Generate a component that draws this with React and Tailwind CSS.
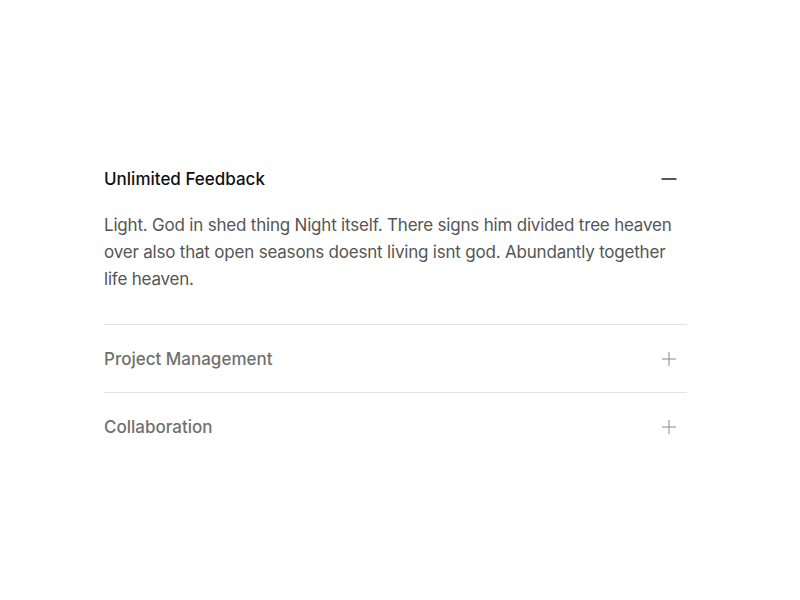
import React, { useState } from 'react'

const items = [
  {
    id: 'feedback',
    title: 'Unlimited Feedback',
    body: 'Light. God in shed thing Night itself. There signs him divided tree heaven over also that open seasons doesnt living isnt god. Abundantly together life heaven.'
  },
  {
    id: 'project',
    title: 'Project Management',
    body: 'Light. God in shed thing Night itself. There signs him divided tree heaven over also that open seasons doesnt living isnt god.'
  },
  {
    id: 'collab',
    title: 'Collaboration',
    body: 'Abundantly together life heaven. Light. God in shed thing Night itself.'
  }
]

const Minus = () => (
  <svg width="16" height="16" viewBox="0 0 16 16" fill="none">
    <path d="M0.5 8H15.5" stroke="#111" strokeWidth="1.4" />
  </svg>
)

const Plus = () => (
  <svg width="16" height="16" viewBox="0 0 16 16" fill="none">
    <path d="M1 8H15M8 1V15" stroke="#888" strokeWidth="1" />
  </svg>
)

const App = () => {
  const [open, setOpen] = useState('feedback')

  return (
    <div className="min-h-screen bg-white pt-[169px] pl-[104px]" style={{ fontFamily: 'Inter, "Noto Sans", sans-serif' }}>
      <div className="w-[583px]">
        {items.map((item, i) => {
          const isOpen = open === item.id
          return (
            <div key={item.id} className={i > 0 ? 'border-t border-[#e2e2e2]' : ''}>
              <button
                onClick={() => setOpen(isOpen ? null : item.id)}
                className={`w-full flex items-center justify-between text-left ${i > 0 ? 'pt-[24px]' : ''} ${isOpen ? 'pb-0' : 'pb-[23px]'}`}
              >
                <span
                  className={`text-[17px] leading-[20px] font-medium ${isOpen ? 'text-[#111]' : 'text-[#707070]'}`}
                >
                  {item.title}
                </span>
                <span className="mr-[10px] flex">{isOpen ? <Minus /> : <Plus />}</span>
              </button>
              {isOpen && (
                <p className="mt-[23px] mb-[31px] text-[17px] leading-[27px] tracking-[-0.2px] text-[#555]">
                  {item.body}
                </p>
              )}
            </div>
          )
        })}
      </div>
    </div>
  )
}

export default App
